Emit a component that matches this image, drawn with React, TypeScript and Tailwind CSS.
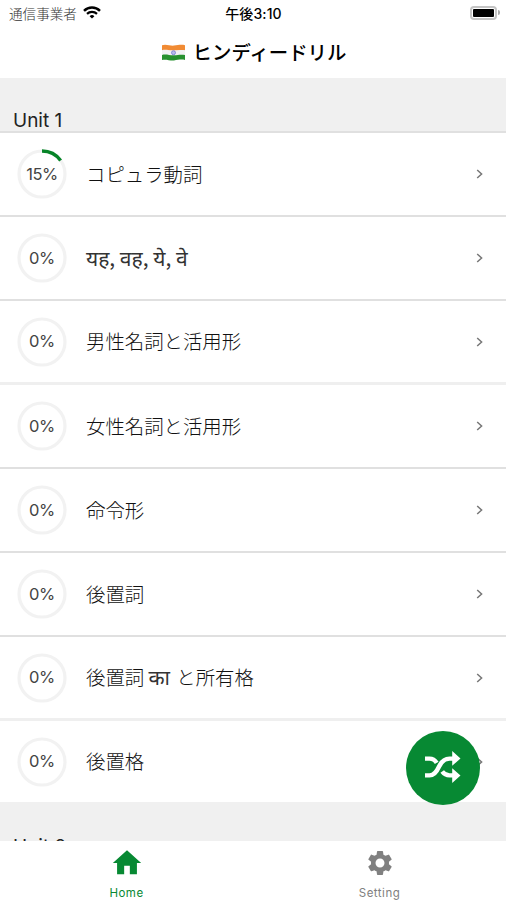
import React from "react";
import { MdHome, MdSettings } from "react-icons/md";

type Lesson = {
  title: React.ReactNode;
  progress: number;
  size: string;
};

const thin = "h-[84px] border-b-2 border-[#e0e0e0]";
const thick = "h-[84px] border-b-[3px] border-[#efefef]";

const lessons: Lesson[] = [
  { title: "コピュラ動詞", progress: 15, size: thin },
  { title: <Hindi>यह, वह, ये, वे</Hindi>, progress: 0, size: thin },
  { title: "男性名詞と活用形", progress: 0, size: thick },
  { title: "女性名詞と活用形", progress: 0, size: thin },
  { title: "命令形", progress: 0, size: thin },
  { title: "後置詞", progress: 0, size: thin },
  {
    title: (
      <>
        後置詞 <Hindi>का</Hindi>
        <span className="ml-[2px]"> と所有格</span>
      </>
    ),
    progress: 0,
    size: thick,
  },
  { title: "後置格", progress: 0, size: "h-[81px]" },
];

function Hindi({ children }: { children: React.ReactNode }) {
  return <span className="text-[21px] font-normal leading-6 text-[#333]">{children}</span>;
}

function StatusBar() {
  return (
    <div className="grid h-[27px] grid-cols-3 items-center pl-[9px] pr-[6px] text-[13.6px]">
      <div className="flex items-center gap-[6px]">
        <span className="whitespace-nowrap font-light text-[#333]">通信事業者</span>
        <svg className="mb-px" width="18" height="13" viewBox="0 0 18 13" fill="none" stroke="#000">
          <path d="M1 4.8a11.6 11.6 0 0 1 16 0" strokeWidth="2.5" />
          <path d="M4 7.9a7.3 7.3 0 0 1 10 0" strokeWidth="2.2" />
          <path d="M9 12.6 6.6 10.2a3.5 3.5 0 0 1 4.8 0z" fill="#000" stroke="none" />
        </svg>
      </div>
      <span className="whitespace-nowrap pb-px pr-[2px] text-center font-[Inter,'Noto_Sans_CJK_JP',sans-serif] text-[14px] font-medium tracking-[0.1px] text-black">
        午後3:10
      </span>
      <div className="flex items-center justify-end">
        <div className="mb-[2px] h-[14px] w-[27px] rounded-[4px] border-2 border-[#c4c4c4] p-px">
          <div className="h-full w-full rounded-[1px] bg-black" />
        </div>
        <div className="mb-[2px] ml-px h-[5px] w-[2px] rounded-r-full bg-[#aaa]" />
      </div>
    </div>
  );
}

function IndiaFlag() {
  return (
    <svg width="24" height="17" viewBox="0 0 24 17">
      <path d="M0 1.2c4-1.6 8 .8 12 .4s7-1.3 11-.4v5.3H0z" fill="#f18b34" />
      <path d="M0 6.2c4-1.2 8 .6 12 .3s7-1 11-.3v5.2H0z" fill="#f1f1f3" />
      <path d="M0 11c4-1.2 8 .6 12 .3s7-1 11-.3v5c-4-.9-7 0-11 .4s-8-1.4-12-.4z" fill="#27912f" />
      <circle cx="11.5" cy="8.7" r="2" fill="#b9bcec" stroke="#7277cf" strokeWidth=".8" />
    </svg>
  );
}

function ProgressRing({ value }: { value: number }) {
  return (
    <div className="grid h-[50px] w-[50px] shrink-0 place-items-center">
      <svg className="col-start-1 row-start-1" width="50" height="50" viewBox="0 0 50 50" fill="none">
        <circle cx="25" cy="25" r="23" stroke="#f2f2f2" strokeWidth="3.2" />
        {value > 0 && (
          <circle
            cx="25"
            cy="25"
            r="23"
            stroke="#078428"
            strokeWidth="3.4"
            pathLength="100"
            strokeDasharray={`${value} 100`}
            transform="rotate(-90 25 25)"
          />
        )}
      </svg>
      <span className="col-start-1 row-start-1 font-[Inter,sans-serif] text-[16.5px] tracking-tight text-[#444]">
        {value}%
      </span>
    </div>
  );
}

function LessonRow({ title, progress, size }: Lesson) {
  return (
    <li className={`flex items-center bg-white pl-[17px] pr-[23px] ${size}`}>
      <ProgressRing value={progress} />
      <span className="ml-[19px] flex-1 whitespace-nowrap pb-px text-[19.4px] font-light leading-7 text-[#111]">
        {title}
      </span>
      <svg width="7" height="10" viewBox="0 0 7 10" fill="none" stroke="#777" strokeWidth="1.5">
        <path d="M1.2 1 5.6 5 1.2 9" />
      </svg>
    </li>
  );
}

function ShuffleIcon() {
  return (
    <svg width="36" height="32" viewBox="0 0 36 32" fill="none" stroke="#fff" strokeWidth="4.4">
      <path d="M0 7.6h4.5c3.5 0 5.5 1.5 7.2 4.2" />
      <path d="M17.2 20.5c1.8 2.5 4 3.9 7.3 3.9H29" />
      <path d="M0 24.400h4.500c4.500 0 6.800-2.800 9.300-8.400s5.200-8.400 10.700-8.400H29" />
      <path d="M27.200 0 35.500 7.400 27.200 14.800zM27.200 17.200l8.300 7.400-8.300 7.400z" fill="#fff" stroke="none" />
    </svg>
  );
}

function TabBar() {
  return (
    <nav className="grid h-[59px] shrink-0 grid-cols-2 bg-white text-[11.5px] tracking-[0.5px]">
      <div className="flex flex-col items-center pt-[5px] text-[#078933]">
        <MdHome size={34} />
        <span className="mt-[5px] font-[Inter,sans-serif] leading-4">Home</span>
      </div>
      <div className="flex flex-col items-center pt-[7px] text-[#808080]">
        <MdSettings size={30} />
        <span className="mt-[7px] font-[Inter,sans-serif] leading-4">Setting</span>
      </div>
    </nav>
  );
}

export default function App() {
  return (
    <div className="relative flex h-[900px] w-[506px] flex-col overflow-hidden bg-white font-['Noto_Sans_CJK_JP','Noto_Sans',sans-serif]">
      <header className="h-[78px] shrink-0">
        <StatusBar />
        <h1 className="flex h-[50px] items-center justify-center gap-[7px] pl-[2px] text-[19.4px] font-medium text-black">
          <IndiaFlag />
          ヒンディードリル
        </h1>
      </header>

      <main className="min-h-0 flex-1 overflow-hidden bg-[#f0f0f0]">
        <h2 className="flex h-[55px] items-end border-b-2 border-[#e0e0e0] pb-px pl-[13px] font-[Inter,sans-serif] text-[19px] leading-[19px] text-[#222]">
          Unit 1
        </h2>
        <ul>
          {lessons.map((lesson, i) => (
            <LessonRow key={i} {...lesson} />
          ))}
        </ul>
        <h2 className="flex h-[54px] items-end pl-[13px] font-[Inter,sans-serif] text-[19px] leading-[19px] text-[#222]">
          Unit 2
        </h2>
      </main>

      <TabBar />

      <button
        aria-label="Shuffle"
        className="absolute bottom-[95px] right-[26px] flex h-[74px] w-[74px] items-center justify-center rounded-full bg-[#078933] pb-[3px]"
      >
        <ShuffleIcon />
      </button>
    </div>
  );
}
